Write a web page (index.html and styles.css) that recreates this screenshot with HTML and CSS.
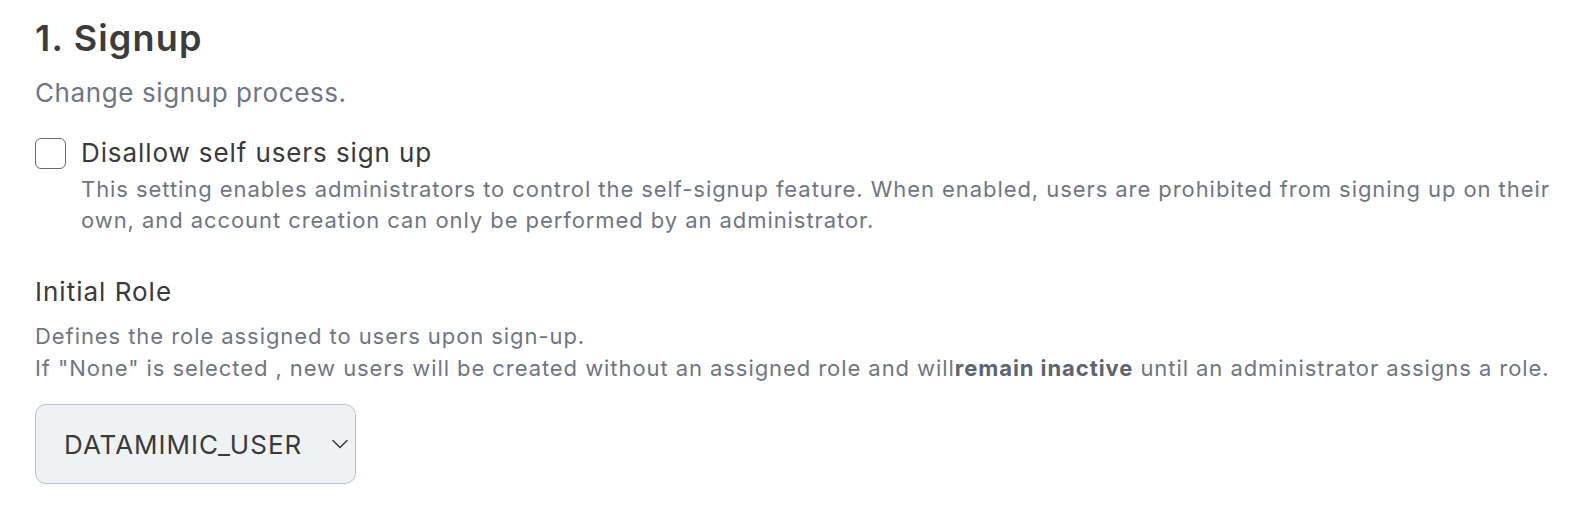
FILE: index.html
```html
<!DOCTYPE html>
<html>
<head>
<meta charset="utf-8">
<link rel="stylesheet" href="styles.css">
</head>
<body>
<section class="section">
  <h2 class="title">1. Signup</h2>
  <p class="subtitle">Change signup process.</p>
  <div class="check-row">
    <span class="checkbox"></span>
    <div class="check-text">
      <div class="check-label">Disallow self users sign up</div>
      <div class="help check-help">This setting enables administrators to control the self-signup feature. When enabled, users are prohibited from signing up on their own, and account creation can only be performed by an administrator.</div>
    </div>
  </div>
  <div class="field">
    <div class="field-label">Initial Role</div>
    <div class="help field-help">Defines the role assigned to users upon sign-up.<br>If "None" is selected , new users will be created without an assigned role and will<b>remain inactive</b> until an administrator assigns a role.</div>
    <div class="select">
      <span class="select-value">DATAMIMIC_USER</span>
      <svg class="chev" width="16" height="10" viewBox="0 0 16 10"><path d="M1 1.5 L8 8.5 L15 1.5" fill="none" stroke="#3a3a3a" stroke-width="1.5" stroke-linecap="round" stroke-linejoin="round"/></svg>
    </div>
  </div>
</section>
</body>
</html>
```
FILE: styles.css
```css
html, body { margin: 0; padding: 0; background: #fff; }
body { font-family: Inter, "Noto Sans", sans-serif; color: #3b3b3b; }
.section { padding: 14px 20px 0 35px; }
.title { margin: 0; font-size: 36px; font-weight: 600; line-height: 48px; color: #3c3c3c; letter-spacing: 1.2px; }
.subtitle { margin: 14px 0 0; font-size: 26px; line-height: 34px; color: #6e7685; letter-spacing: 0.6px; }
.check-row { display: flex; gap: 15px; margin-top: 26px; }
.checkbox { width: 29px; height: 29px; border: 1.5px solid #6a6a6a; border-radius: 6px; flex: none; margin-top: 2px; }
.check-label { font-size: 26px; line-height: 34px; color: #3a3a3a; letter-spacing: 0.9px; }
.help { font-size: 22px; line-height: 31px; color: #6e7685; letter-spacing: 0.93px; }
.check-help { margin-top: 4px; }
.field { margin-top: 39px; }
.field-label { font-size: 26px; line-height: 34px; color: #3a3a3a; letter-spacing: 1px; }
.field-help { margin-top: 11px; line-height: 32px; }
.field-help b { font-weight: 700; color: #5d6471; }
.select { margin-top: 20px; width: 321px; height: 80px; box-sizing: border-box; border: 1.5px solid #b6c4c4; border-radius: 11px; background: #eff2f4; display: flex; align-items: center; justify-content: space-between; padding: 0 7px 0 28px; }
.select-value { font-size: 26px; color: #3a3a3a; letter-spacing: 1px; }
```
